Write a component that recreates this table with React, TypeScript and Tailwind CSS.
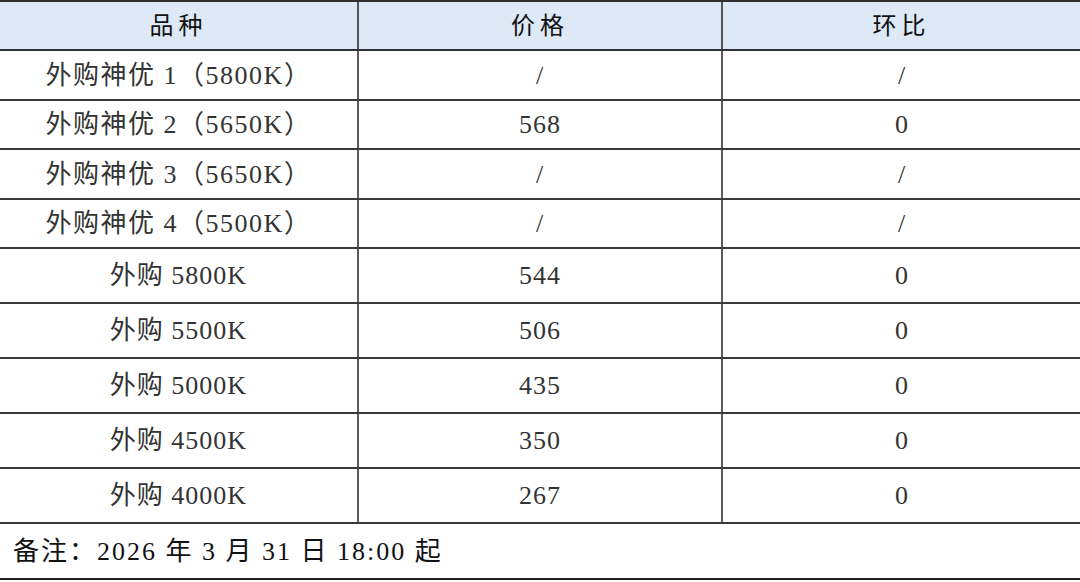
import React from "react";

const rows: Array<{ name: string; price: string; mom: string; h: string; wide?: boolean }> = [
  { name: "外购神优 1（5800K）", price: "/", mom: "/", h: "h-[50px]", wide: true },
  { name: "外购神优 2（5650K）", price: "568", mom: "0", h: "h-[49px]", wide: true },
  { name: "外购神优 3（5650K）", price: "/", mom: "/", h: "h-[50px]", wide: true },
  { name: "外购神优 4（5500K）", price: "/", mom: "/", h: "h-[49px]", wide: true },
  { name: "外购 5800K", price: "544", mom: "0", h: "h-[55px]" },
  { name: "外购 5500K", price: "506", mom: "0", h: "h-[55px]" },
  { name: "外购 5000K", price: "435", mom: "0", h: "h-[55px]" },
  { name: "外购 4500K", price: "350", mom: "0", h: "h-[55px]" },
  { name: "外购 4000K", price: "267", mom: "0", h: "h-[55px]" },
];

const font = "font-['Liberation_Serif','Noto_Sans_CJK_SC',serif]";

export default function App() {
  return (
    <div className={`w-[1080px] h-[582px] bg-white overflow-hidden ${font}`}>
      <div className="grid grid-cols-[359px_364px_1fr] h-[51px] border-t-2 border-b-2 border-[#2f2f2f] bg-[#dde9f6] text-[24px] text-[#111] tracking-[5px]">
        <div className="flex items-center justify-center border-r-2 border-[#555]">品种</div>
        <div className="flex items-center justify-center border-r-2 border-[#555]">价格</div>
        <div className="flex items-center justify-center">环比</div>
      </div>
      {rows.map((r) => (
        <div
          key={r.name}
          className={`grid grid-cols-[359px_364px_1fr] ${r.h} border-b-2 border-[#3a3a3a] text-[26px] text-[#333]`}
        >
          <div className={`flex items-center justify-center border-r-2 border-[#5a5a5a] ${r.wide ? "tracking-[1.5px]" : "tracking-[1px]"}`}>
            {r.name}
          </div>
          <div className="flex items-center justify-center border-r-2 border-[#5a5a5a] tracking-[1px]">{r.price}</div>
          <div className="flex items-center justify-center">{r.mom}</div>
        </div>
      ))}
      <div className="flex items-center h-[56px] border-b-2 border-[#222] pl-[13px] text-[26px] text-[#111] tracking-[2px]">
        备注：2026 年 3 月 31 日 18:00 起
      </div>
    </div>
  );
}
